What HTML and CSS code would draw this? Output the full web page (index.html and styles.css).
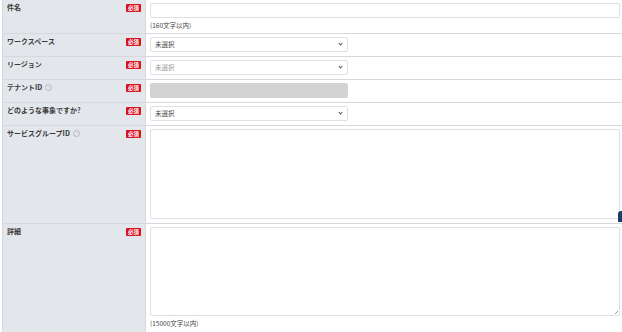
FILE: index.html
```html
<!DOCTYPE html>
<html lang="ja">
<head>
    <meta charset="UTF-8">
    <title>お問い合わせ</title>
    <link rel="stylesheet" href="styles.css">
</head>
<body>
    <div class="form-table">
        <div class="row row-title">
            <div class="label-cell"><span class="label-text">件名</span><span class="required">必須</span></div>
            <div class="field-cell">
                <input type="text" class="text-input">
                <p class="note">(160文字以内)</p>
            </div>
        </div>
        <div class="row">
            <div class="label-cell"><span class="label-text">ワークスペース</span><span class="required">必須</span></div>
            <div class="field-cell">
                <div class="select-box">未選択<span class="chevron"></span></div>
            </div>
        </div>
        <div class="row">
            <div class="label-cell"><span class="label-text">リージョン</span><span class="required">必須</span></div>
            <div class="field-cell">
                <div class="select-box muted">未選択<span class="chevron"></span></div>
            </div>
        </div>
        <div class="row">
            <div class="label-cell"><span class="label-text">テナントID<span class="help">?</span></span><span class="required">必須</span></div>
            <div class="field-cell">
                <div class="readonly-box"></div>
            </div>
        </div>
        <div class="row">
            <div class="label-cell"><span class="label-text">どのような事象ですか?</span><span class="required">必須</span></div>
            <div class="field-cell">
                <div class="select-box">未選択<span class="chevron"></span></div>
            </div>
        </div>
        <div class="row row-group">
            <div class="label-cell"><span class="label-text">サービスグループID<span class="help">?</span></span><span class="required">必須</span></div>
            <div class="field-cell">
                <div class="text-area area-group"></div>
            </div>
        </div>
        <div class="row row-detail">
            <div class="label-cell"><span class="label-text">詳細</span><span class="required">必須</span></div>
            <div class="field-cell">
                <div class="text-area area-detail"><span class="grip"></span></div>
                <p class="note">(15000文字以内)</p>
            </div>
        </div>
        <div class="page-top"></div>
    </div>
</body>
</html>
```

FILE: styles.css
```css
body {
    margin: 0;
    background: #ffffff;
    font-family: "Noto Sans CJK JP", "Noto Sans", sans-serif;
    color: #333;
    overflow: hidden;
}
.form-table {
    position: relative;
    margin-left: 2px;
    border-left: 1px solid #d3d8de;
}
.row {
    display: flex;
    height: 22px;
    border-bottom: 1px solid #d5d9de;
}
.row-title {
    height: 33px;
}
.row-group {
    height: 97px;
}
.row-detail {
    height: 120px;
    border-bottom: none;
}
.label-cell {
    width: 143px;
    flex-shrink: 0;
    background: #e3e7ec;
    border-right: 1px solid #d5d9de;
    display: flex;
    justify-content: space-between;
    align-items: flex-start;
    padding: 3px 4px 0 4px;
    box-sizing: border-box;
}
.label-text {
    font-size: 7px;
    line-height: 9px;
    font-weight: bold;
    color: #3a3a3a;
    display: flex;
    align-items: center;
}
.help {
    display: inline-block;
    width: 5px;
    height: 5px;
    margin-left: 3px;
    border: 1px solid #b5b9be;
    border-radius: 50%;
    font-size: 4px;
    line-height: 5px;
    text-align: center;
    color: #b5b9be;
    font-weight: normal;
}
.required {
    margin-top: 1px;
    width: 15px;
    height: 8px;
    background: #d7101e;
    color: #fff;
    font-size: 5.5px;
    line-height: 8px;
    text-align: center;
    font-weight: bold;
    border-radius: 1px;
}
.field-cell {
    flex: 1;
    padding: 3px 2px 0 4px;
}
.text-input {
    display: block;
    width: 470px;
    height: 15px;
    box-sizing: border-box;
    border: 1px solid #dcdfe3;
    border-radius: 2px;
    margin: 0;
    padding: 0;
}
.note {
    margin: 3px 0 0 0;
    font-size: 6.5px;
    line-height: 8px;
    color: #444;
}
.select-box {
    position: relative;
    width: 198px;
    height: 15px;
    box-sizing: border-box;
    border: 1px solid #dcdfe3;
    border-radius: 2px;
    padding-left: 4px;
    font-size: 6.5px;
    line-height: 13px;
    color: #444;
}
.select-box.muted {
    color: #999;
}
.chevron {
    position: absolute;
    right: 5px;
    top: 4px;
    width: 2px;
    height: 2px;
    border-right: 1px solid #555;
    border-bottom: 1px solid #555;
    transform: rotate(45deg);
}
.readonly-box {
    width: 198px;
    height: 15px;
    background: #d3d3d3;
    border-radius: 2px;
}
.text-area {
    position: relative;
    width: 470px;
    box-sizing: border-box;
    border: 1px solid #dcdfe3;
    border-radius: 2px;
}
.area-group {
    height: 90px;
}
.area-detail {
    height: 89px;
}
.grip {
    position: absolute;
    right: 1px;
    bottom: 1px;
    width: 3px;
    height: 3px;
    background: linear-gradient(135deg, transparent 45%, #999 45%, #999 60%, transparent 60%);
}
.page-top {
    position: absolute;
    right: 0;
    top: 211px;
    width: 4px;
    height: 11px;
    background: #1b3f6b;
    border-radius: 3px 0 0 0;
}
```
